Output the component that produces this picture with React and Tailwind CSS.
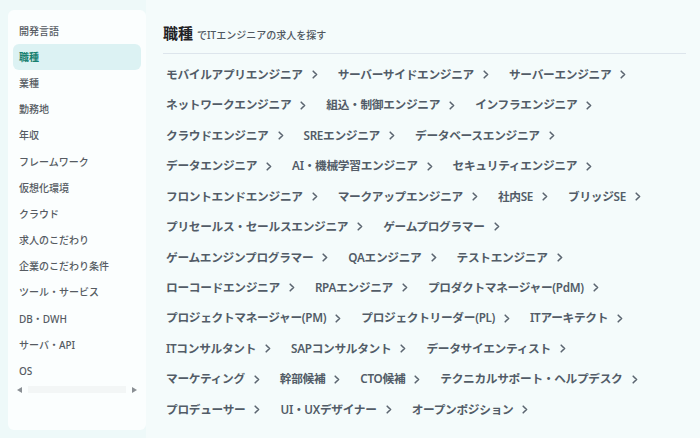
import React from 'react'

const menu = [
  '開発言語', '職種', '業種', '勤務地', '年収', 'フレームワーク', '仮想化環境', 'クラウド',
  '求人のこだわり', '企業のこだわり条件', 'ツール・サービス', 'DB・DWH', 'サーバ・API', 'OS',
]

const rows = [
  ['モバイルアプリエンジニア', 'サーバーサイドエンジニア', 'サーバーエンジニア'],
  ['ネットワークエンジニア', '組込・制御エンジニア', 'インフラエンジニア'],
  ['クラウドエンジニア', 'SREエンジニア', 'データベースエンジニア'],
  ['データエンジニア', 'AI・機械学習エンジニア', 'セキュリティエンジニア'],
  ['フロントエンドエンジニア', 'マークアップエンジニア', '社内SE', 'ブリッジSE'],
  ['プリセールス・セールスエンジニア', 'ゲームプログラマー'],
  ['ゲームエンジンプログラマー', 'QAエンジニア', 'テストエンジニア'],
  ['ローコードエンジニア', 'RPAエンジニア', 'プロダクトマネージャー(PdM)'],
  ['プロジェクトマネージャー(PM)', 'プロジェクトリーダー(PL)', 'ITアーキテクト'],
  ['ITコンサルタント', 'SAPコンサルタント', 'データサイエンティスト'],
  ['マーケティング', '幹部候補', 'CTO候補', 'テクニカルサポート・ヘルプデスク'],
  ['プロデューサー', 'UI・UXデザイナー', 'オープンポジション'],
]

function Chevron() {
  return (
    <svg width="6" height="9" viewBox="0 0 6 9" className="ml-[9px] shrink-0">
      <path d="M1.2 1.2 L4.6 4.5 L1.2 7.8" fill="none" stroke="#5b6570" strokeWidth="1.6" strokeLinecap="round" strokeLinejoin="round" />
    </svg>
  )
}

export default function App() {
  return (
    <div
      className="w-[700px] h-[438px] bg-[#eef9f9] flex overflow-hidden"
      style={{ fontFamily: '"Noto Sans", "Noto Sans CJK JP", sans-serif' }}
    >
      {/* SIDEBAR */}
      <div className="w-[138px] ml-[8px] mt-[10px] h-[420px] bg-[#fbfefe] rounded-md pt-[8px] px-[5px] flex flex-col shrink-0">
        {menu.map((m) => (
          <div
            key={m}
            className={`h-[26.2px] px-[6px] flex items-center rounded-md text-[10px] ${
              m === '職種' ? 'bg-[#dcf2f3] text-[#17806f] font-bold' : 'text-[#555b62] font-medium'
            }`}
          >
            {m}
          </div>
        ))}
        <div className="flex items-center justify-between px-[4px] h-[10px]">
          <div className="w-0 h-0 border-y-[3.5px] border-y-transparent border-r-[5px] border-r-[#8a8f94]" />
          <div className="flex-1 mx-[6px] h-[7px] bg-[#f3f6f6]" />
          <div className="w-0 h-0 border-y-[3.5px] border-y-transparent border-l-[5px] border-l-[#8a8f94]" />
        </div>
      </div>

      {/* MAIN */}
      <div className="flex-1 bg-[#f4fbfb] pl-[17px] pr-[14px] pt-[22px]">
        <div className="flex items-baseline gap-[4px] pb-[8px] border-b border-[#dde5ec]">
          <h1 className="text-[15px] font-bold text-[#1f2326]">職種</h1>
          <span className="text-[10px] text-[#4f5760] font-medium">でITエンジニアの求人を探す</span>
        </div>
        <div className="pt-[6px] pl-[3px]">
          {rows.map((r, i) => (
            <div key={i} className="flex items-center gap-[20px] h-[30.45px]">
              {r.map((t) => (
                <a key={t} className="flex items-center text-[11.7px] font-semibold text-[#525c67] whitespace-nowrap tracking-[-0.3px]">
                  {t}
                  <Chevron />
                </a>
              ))}
            </div>
          ))}
        </div>
      </div>
    </div>
  )
}
